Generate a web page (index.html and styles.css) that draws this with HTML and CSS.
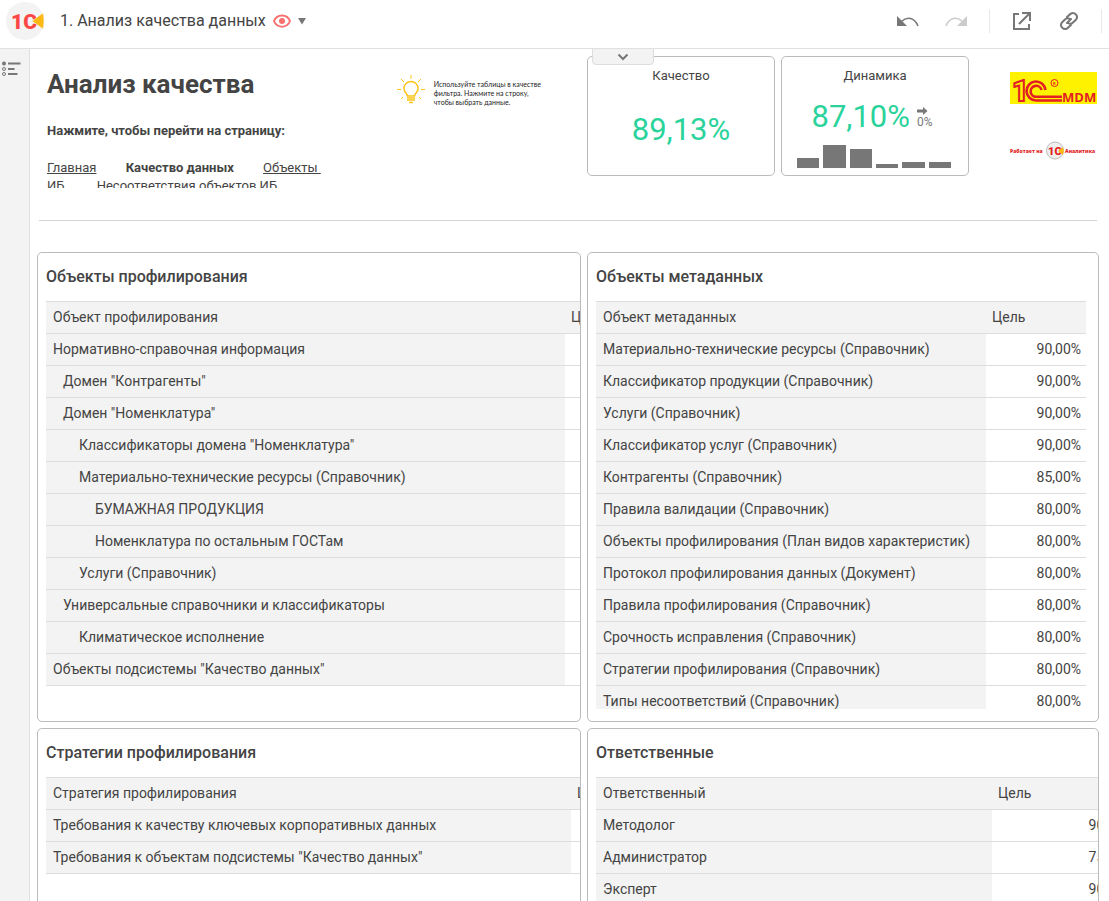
FILE: index.html
```html
<!DOCTYPE html>
<html lang="ru">
<head>
<meta charset="utf-8">
<meta name="viewport" content="width=device-width, initial-scale=1">
<title>1. Анализ качества данных</title>
<link rel="stylesheet" href="styles.css">
</head>
<body>
<header class="topbar">
  <a class="brand" href="#" aria-label="1С">
    <svg width="40" height="40" viewBox="0 0 40 40"><circle cx="20" cy="20" r="19" fill="#f3f3f3"/><text class="brand-text" x="6" y="28">1С</text><path d="M27 20 38 12Q40 20 38 28Z" fill="#fdb913" stroke="#f3f3f3" stroke-width=".5"/></svg>
  </a>
  <h1 class="doc-title">1. Анализ качества данных</h1>
  <button class="icon-button eye" aria-label="Просмотр">
    <svg width="18" height="14" viewBox="0 0 18 14" fill="none" stroke="#fa7070" stroke-width="2"><path d="M1 7C4-.5 14-.5 17 7 14 14.500 4 14.500 1 7Z"/><circle cx="9" cy="7" r="3" fill="#fa7070" stroke="none"/></svg>
  </button>
  <button class="icon-button" aria-label="Меню">
    <svg width="10" height="8" viewBox="0 0 10 8"><path d="M1 1h8L5 7.500Z" fill="#777"/></svg>
  </button>
  <div class="tools">
    <button class="icon-button undo" aria-label="Отменить">
      <svg width="22" height="12" viewBox="0 0 22 12"><path d="M0 1V11H10Z" fill="#777"/><path d="M4.500 6.500C10 1 17.500 2.500 21 11" fill="none" stroke="#777" stroke-width="1.600"/></svg>
    </button>
    <button class="icon-button" aria-label="Повторить">
      <svg width="22" height="12" viewBox="0 0 22 12"><path d="M22 1V11H12Z" fill="#ccc"/><path d="M17.500 6.500C12 1 4.500 2.500 1 11" fill="none" stroke="#ccc" stroke-width="1.600"/></svg>
    </button>
    <span class="divider"></span>
    <button class="icon-button" aria-label="Открыть">
      <svg width="20" height="20" viewBox="0 0 20 20" fill="none" stroke="#777" stroke-width="2"><path d="M7 3H2V18H17V13M10 2H18V10M18 2 7 13"/></svg>
    </button>
    <button class="icon-button link-button" aria-label="Ссылка">
      <svg width="20" height="20" viewBox="0 0 20 20" fill="none" stroke="#777" stroke-width="2" stroke-linecap="round"><path d="M8 6 11.500 2.900a4 4 0 0 1 5.600 5.600L14 11.500a4 4 0 0 1-5 .5M12 14 8.500 17.100a4 4 0 0 1-5.600-5.600L6 8.500a4 4 0 0 1 5-.5M8 12 12 8"/></svg>
    </button>
    <span class="divider"></span>
  </div>
</header>
<div class="workspace">
  <aside class="rail">
    <button class="icon-button" aria-label="Содержание">
      <svg width="19" height="16" viewBox="0 0 19 16" fill="none" stroke="#777"><path d="M6 2.500H18.500M6 8H12.500M6 13H15.500" stroke-width="2"/><circle cx="2" cy="2.500" r="2" fill="#777" stroke="none"/><circle cx="2" cy="8" r="1.500"/><circle cx="2" cy="13" r="1.500"/></svg>
    </button>
  </aside>
  <main class="board">
    <section class="summary">
      <div class="intro">
        <div class="intro-text">
          <h2 class="page-title">Анализ качества</h2>
          <p class="lead">Нажмите, чтобы перейти на страницу:</p>
          <nav class="pages"><a href="#">Главная</a> <b>Качество данных</b> <a class="wide" href="#">Объекты&nbsp;<wbr>ИБ</a> <a href="#">Несоответствия&nbsp;объектов&nbsp;ИБ</a></nav>
        </div>
        <div class="hint">
          <svg width="28" height="29" viewBox="0 0 28 29" fill="none" stroke="#fcc419" stroke-width="1"><path d="M0 14.500H4M24 14.500H28M14 0V4M4 4 7 7M24 4 21 7M4 24 6 22M24 24 22 22"/><path d="M10.500 21C10 18 7 17.500 7 13.500a7 7 0 0 1 14 0C21 17.500 18 18 17.500 21Z" stroke-width="1.500"/><path d="M10 23H18M10 25H18M12 27.500H16" stroke-width="1.500"/></svg>
          <p>Используйте таблицы в качестве<br>фильтра. Нажмите на строку,<br>чтобы выбрать данные.</p>
        </div>
      </div>
      <div class="metrics">
        <button class="drawer-tab" aria-label="Развернуть">
          <svg width="12" height="8" viewBox="0 0 12 8" fill="none" stroke="#777" stroke-width="2"><path d="M1.500 1.500 6 6 10.500 1.500"/></svg>
        </button>
        <article class="card">
          <h3>Качество</h3>
          <p class="value value-solo">89,13%</p>
        </article>
        <article class="card">
          <h3>Динамика</h3>
          <div class="trend">
            <p class="value">87,10%</p>
            <p class="delta"><svg width="11" height="8" viewBox="0 0 11 8"><path d="M0 2.500H6V0L10.500 4 6 8V5.500H0Z" fill="#777"/></svg>0%</p>
          </div>
          <div class="bars"><i style="height:10px"></i><i style="height:23px"></i><i style="height:19px"></i><i style="height:4px"></i><i style="height:6px"></i><i style="height:6px"></i></div>
        </article>
        <div class="logos">
          <svg width="88" height="32" viewBox="0 0 88 32" role="img" aria-label="1С MDM"><path d="M0 0H87V32H0Z" fill="#fff200"/><text class="mdm-one" x="2" y="29">1</text><g fill="none" stroke="#e31e24" stroke-width="2.600"><path d="M35.500 18A9.500 9.500 0 1 0 26 28.500H52"/><path d="M31.500 18A5.500 5.500 0 1 0 26 24.800H52"/></g><circle cx="44.500" cy="11" r="3.500" fill="none" stroke="#e31e24"/><text class="mdm-r" x="43" y="13">R</text><text class="mdm-name" x="52" y="30">MDM</text></svg>
          <svg width="88" height="20" viewBox="0 0 88 20"><circle cx="45" cy="9.500" r="8.500" fill="#eee" stroke="#bbb"/><text class="run-one" x="38" y="14">1С</text><path d="M48 10 53 6Q54.500 10 53 14Z" fill="#fdb913"/><text class="run-text" x="0" y="12">Работает на</text><text class="run-text" x="55" y="12">Аналитика</text></svg>
        </div>
      </div>
    </section>
    <hr class="rule">
    <section class="panels">
      <article class="panel">
        <h3>Объекты профилирования</h3>
        <div class="scroller">
          <table class="grid objects">
            <thead><tr><th>Объект профилирования</th><th>Цель</th></tr></thead>
            <tbody>
              <tr><td>Нормативно-справочная информация</td><td></td></tr>
              <tr><td class="level-1">Домен "Контрагенты"</td><td></td></tr>
              <tr><td class="level-1">Домен "Номенклатура"</td><td></td></tr>
              <tr><td class="level-2">Классификаторы домена "Номенклатура"</td><td></td></tr>
              <tr><td class="level-2">Материально-технические ресурсы (Справочник)</td><td></td></tr>
              <tr><td class="level-3">БУМАЖНАЯ ПРОДУКЦИЯ</td><td></td></tr>
              <tr><td class="level-3">Номенклатура по остальным ГОСТам</td><td></td></tr>
              <tr><td class="level-2">Услуги (Справочник)</td><td></td></tr>
              <tr><td class="level-1">Универсальные справочники и классификаторы</td><td></td></tr>
              <tr><td class="level-2">Климатическое исполнение</td><td></td></tr>
              <tr><td>Объекты подсистемы "Качество данных"</td><td></td></tr>
            </tbody>
          </table>
        </div>
      </article>
      <article class="panel">
        <h3>Объекты метаданных</h3>
        <div class="scroller inset">
          <table class="grid metadata">
            <thead><tr><th>Объект метаданных</th><th>Цель</th></tr></thead>
            <tbody>
              <tr><td>Материально-технические ресурсы (Справочник)</td><td>90,00%</td></tr>
              <tr><td>Классификатор продукции (Справочник)</td><td>90,00%</td></tr>
              <tr><td>Услуги (Справочник)</td><td>90,00%</td></tr>
              <tr><td>Классификатор услуг (Справочник)</td><td>90,00%</td></tr>
              <tr><td>Контрагенты (Справочник)</td><td>85,00%</td></tr>
              <tr><td>Правила валидации (Справочник)</td><td>80,00%</td></tr>
              <tr><td>Объекты профилирования (План видов характеристик)</td><td>80,00%</td></tr>
              <tr><td>Протокол профилирования данных (Документ)</td><td>80,00%</td></tr>
              <tr><td>Правила профилирования (Справочник)</td><td>80,00%</td></tr>
              <tr><td>Срочность исправления (Справочник)</td><td>80,00%</td></tr>
              <tr><td>Стратегии профилирования (Справочник)</td><td>80,00%</td></tr>
              <tr><td>Типы несоответствий (Справочник)</td><td>80,00%</td></tr>
            </tbody>
          </table>
        </div>
      </article>
      <article class="panel">
        <h3>Стратегии профилирования</h3>
        <div class="scroller">
          <table class="grid strategies">
            <thead><tr><th>Стратегия профилирования</th><th>Цель</th></tr></thead>
            <tbody>
              <tr><td>Требования к качеству ключевых корпоративных данных</td><td></td></tr>
              <tr><td>Требования к объектам подсистемы "Качество данных"</td><td></td></tr>
            </tbody>
          </table>
        </div>
      </article>
      <article class="panel">
        <h3>Ответственные</h3>
        <div class="scroller">
          <table class="grid people">
            <thead><tr><th>Ответственный</th><th>Цель</th></tr></thead>
            <tbody>
              <tr><td>Методолог</td><td>90,00%</td></tr>
              <tr><td>Администратор</td><td>75,00%</td></tr>
              <tr><td>Эксперт</td><td>90,00%</td></tr>
            </tbody>
          </table>
        </div>
      </article>
    </section>
  </main>
</div>
</body>
</html>
```
FILE: styles.css
```css
* { box-sizing: border-box; }
body {
  margin: 0;
  height: 100vh;
  display: flex;
  flex-direction: column;
  overflow: hidden;
  background: #fff;
  color: #444;
  font: 14px/20px Roboto, sans-serif;
}
h1, h2, h3, p { margin: 0; }
a { color: inherit; }
svg { display: block; flex: none; }
.icon-button { display: flex; padding: 0; border: 0; background: none; }

.topbar {
  flex: none;
  display: flex;
  align-items: center;
  height: 49px;
  padding: 0 7px 7px 5px;
  border-bottom: 1px solid #e0e0e0;
}
.brand-text { font: 900 21px Roboto, sans-serif; fill: #fb4646; }
.doc-title { margin: 0 7px 0 15px; font-size: 16px; font-weight: 400; }
.eye { margin-right: 6px; }
.tools { display: flex; align-items: center; gap: 22px; margin-left: auto; }
.link-button { margin-left: 5px; }
.undo { margin-right: 4px; }
.divider { width: 1px; height: 24px; background: #e8e8e8; }

.workspace { flex: 1; min-height: 0; display: flex; }
.rail {
  flex: none;
  width: 30px;
  padding: 12px 2px;
  background: #f3f3f3;
  border-right: 1px solid #e0e0e0;
}
.board { flex: 1; min-width: 0; padding: 7px 10px 0 7px; overflow: hidden; }

.summary, .panels { display: grid; grid-template-columns: 17fr 16fr; gap: 6px; }
.intro { display: flex; justify-content: space-between; padding: 12px 40px 0 10px; }
.intro-text { width: 284px; }
.page-title { font-size: 26px; line-height: 32px; font-weight: 700; }
.lead { margin-top: 21px; font-size: 13px; line-height: 20px; font-weight: 700; }
.pages { height: 29px; margin-top: 18px; overflow: hidden; font-size: 13px; line-height: 18px; }
.pages a, .pages b { margin-right: 26px; }
.pages .wide { margin-right: 29px; }
.hint { display: flex; gap: 9px; height: 29px; margin-top: 7px; }
.hint p { padding-top: 5px; color: #222; font: 7px/9px Lato, "Open Sans", sans-serif; white-space: nowrap; }

.metrics { position: relative; display: flex; gap: 6px; }
.drawer-tab {
  position: absolute;
  top: -8px;
  left: 5px;
  display: flex;
  align-items: center;
  justify-content: center;
  width: 62px;
  height: 17px;
  padding: 0;
  background: #f3f3f3;
  border: 1px solid #ddd;
  border-radius: 0 0 4px 4px;
}
.card { width: 188px; height: 120px; padding: 9px 15px 0; border: 1px solid #bbb; border-radius: 5px; text-align: center; }
.card h3 { font-size: 13px; line-height: 20px; font-weight: 400; }
.value { color: #2ad39b; font-size: 31px; line-height: 36px; }
.value-solo { margin-top: 26px; }
.trend { display: flex; justify-content: center; gap: 7px; margin: 13px 6px 0 0; }
.delta { padding-top: 8px; color: #777; font-size: 12px; line-height: 14px; }
.bars { display: flex; align-items: flex-end; gap: 4px; height: 33px; margin-right: 2px; }
.bars i { flex: 1; background: #777; }
.logos { flex: 1; display: flex; flex-direction: column; align-items: flex-end; gap: 37px; padding: 16px 1px 0 0; }
.mdm-one { font: 900 29px Roboto, sans-serif; fill: #fff200; stroke: #e31e24; stroke-width: 2px; }
.mdm-r { font: 700 4px Roboto, sans-serif; fill: #e31e24; }
.mdm-name { font: 700 13px "Open Sans", sans-serif; fill: #e31e24; }
.run-one { font: 900 11px Roboto, sans-serif; fill: #e31e24; }
.run-text { font: 800 5px "Open Sans", sans-serif; fill: #e31e24; }

.rule { height: 1px; margin: 32px 2px 31px; border: 0; background: #d4d4d4; }

.panel { min-width: 0; padding: 9px 0 12px 8px; border: 1px solid #bbb; border-radius: 5px; overflow: hidden; }
.panel h3 { margin-bottom: 9px; font-size: 16px; line-height: 30px; font-weight: 500; }
.scroller { height: 408px; overflow: hidden; }
.inset { margin-right: 12px; }
.grid { border-collapse: separate; border-spacing: 0; table-layout: fixed; border-top: 1px solid #ddd; }
.objects { width: 620px; }
.metadata { width: 100%; }
.strategies { width: 626px; }
.people { width: 542px; }
.grid th, .grid td { height: 32px; padding: 0 6px 2px; border-bottom: 1px solid #ddd; font-weight: 400; text-align: left; white-space: nowrap; }
.grid th, .grid td:first-child { background: #f3f3f3; }
.grid th:first-child, .grid td:first-child { padding-left: 7px; }
.grid td:last-child { padding-right: 5px; text-align: right; }
.grid th:last-child { width: 100px; }
.objects th:last-child, .strategies th:last-child { width: 101px; }
.people th:last-child { width: 146px; }
.grid td.level-1 { padding-left: 17px; }
.grid td.level-2 { padding-left: 33px; }
.grid td.level-3 { padding-left: 49px; }
```
